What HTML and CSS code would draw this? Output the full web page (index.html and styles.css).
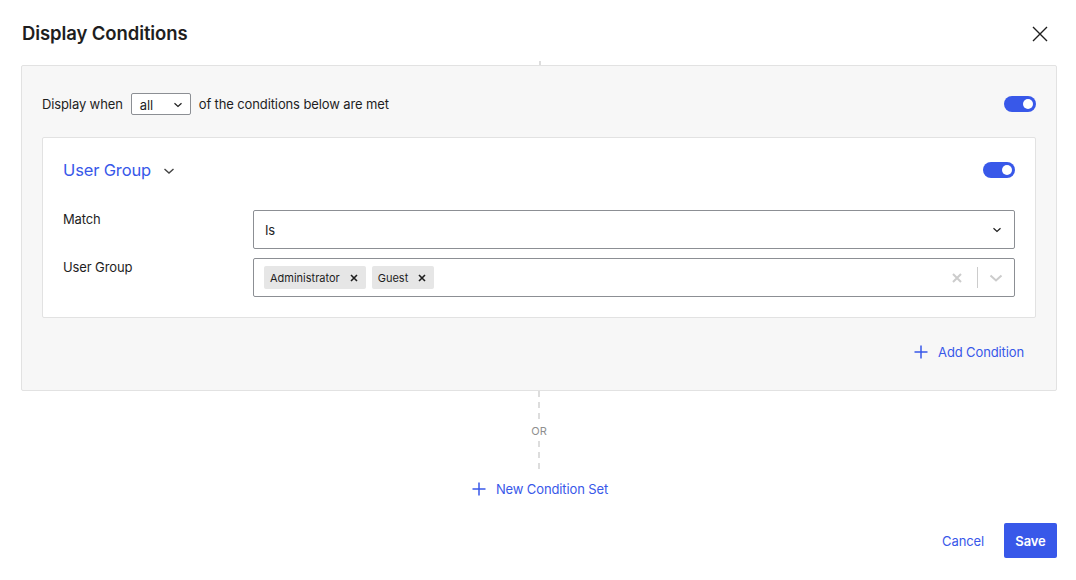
FILE: index.html
```html
<!DOCTYPE html>
<html>
<head>
<meta charset="utf-8">
<link rel="stylesheet" href="styles.css">
</head>
<body>
<div class="modal">
  <div class="header">
    <h1 class="title">Display Conditions</h1>
    <button class="close" aria-label="Close">
      <svg width="16" height="16" viewBox="0 0 16 16"><path d="M1 1L15 15M15 1L1 15" stroke="#1e1e1e" stroke-width="1.4" fill="none"/></svg>
    </button>
  </div>
  <div class="connector-top"></div>
  <div class="set">
    <div class="set-row">
      <div class="set-intro">
        <span>Display when</span>
        <div class="mini-select">
          <span>all</span>
          <svg width="10" height="6" viewBox="0 0 10 6"><path d="M1.5 1.2L5 4.5L8.5 1.2" stroke="#1e1e1e" stroke-width="1.2" fill="none"/></svg>
        </div>
        <span>of the conditions below are met</span>
      </div>
      <div class="toggle"><span class="knob"></span></div>
    </div>
    <div class="card">
      <div class="card-head">
        <div class="card-title">
          <span>User Group</span>
          <svg width="12" height="8" viewBox="0 0 12 8"><path d="M1.5 2L6 6L10.5 2" stroke="#444" stroke-width="1.4" fill="none"/></svg>
        </div>
        <div class="toggle"><span class="knob"></span></div>
      </div>
      <div class="fields">
        <div class="field">
          <label class="field-label">Match</label>
          <div class="control select">
            <span>Is</span>
            <svg width="10" height="6" viewBox="0 0 10 6"><path d="M1.5 1.2L5 4.5L8.5 1.2" stroke="#1e1e1e" stroke-width="1.2" fill="none"/></svg>
          </div>
        </div>
        <div class="field">
          <label class="field-label">User Group</label>
          <div class="control multi">
            <div class="tags">
              <span class="tag">Administrator<svg class="tag-x" width="8" height="8" viewBox="0 0 8 8"><path d="M1 1L7 7M7 1L1 7" stroke="#1e1e1e" stroke-width="1.6" fill="none"/></svg></span>
              <span class="tag">Guest<svg class="tag-x" width="8" height="8" viewBox="0 0 8 8"><path d="M1 1L7 7M7 1L1 7" stroke="#1e1e1e" stroke-width="1.6" fill="none"/></svg></span>
            </div>
            <div class="indicators">
              <svg class="clear" width="12" height="12" viewBox="0 0 12 12"><path d="M2 2L10 10M10 2L2 10" stroke="#cccccc" stroke-width="2" fill="none"/></svg>
              <span class="sep"></span>
              <svg class="drop" width="14" height="8" viewBox="0 0 14 8"><path d="M1.5 1.5L7 6.5L12.5 1.5" stroke="#cccccc" stroke-width="2" fill="none"/></svg>
            </div>
          </div>
        </div>
      </div>
    </div>
    <div class="add-row">
      <button class="link-btn">
        <svg width="14" height="14" viewBox="0 0 14 14"><path d="M7 0.5V13.5M0.5 7H13.5" stroke="#3858e9" stroke-width="1.5" fill="none"/></svg>
        <span>Add Condition</span>
      </button>
    </div>
  </div>
  <div class="or-block">
    <div class="dash dash-a"></div>
    <div class="or">OR</div>
    <div class="dash dash-b"></div>
    <button class="link-btn new-set">
      <svg width="14" height="14" viewBox="0 0 14 14"><path d="M7 0.5V13.5M0.5 7H13.5" stroke="#3858e9" stroke-width="1.5" fill="none"/></svg>
      <span>New Condition Set</span>
    </button>
  </div>
  <div class="footer">
    <button class="cancel">Cancel</button>
    <button class="save">Save</button>
  </div>
</div>
</body>
</html>
```
FILE: styles.css
```css
* { box-sizing: border-box; }
html, body { margin: 0; padding: 0; background: #fff; }
body {
  font-family: Inter, "Noto Sans", "Liberation Sans", sans-serif;
  font-size: 13px;
  letter-spacing: -0.12px;
  color: #1e1e1e;
}
button { font-family: inherit; letter-spacing: inherit; border: none; background: none; padding: 0; cursor: pointer; }
.modal { width: 1076px; height: 580px; padding: 0 19px 0 21px; }
.header {
  height: 61px;
  display: flex;
  align-items: flex-start;
  justify-content: space-between;
  padding-top: 20px;
}
.title { margin: 0; font-size: 18.5px; font-weight: 600; line-height: 26px; letter-spacing: -0.1px; padding-left: 1px; }
.close { width: 16px; height: 16px; margin-top: 6px; margin-right: 9px; display: flex; }
.connector-top { width: 2px; height: 4px; background: #dddddd; margin-left: 518px; }
.set {
  background: #f7f7f7;
  border: 1px solid #e2e2e2;
  border-radius: 2px;
  width: 1036px;
  padding: 27px 20px 28px 20px;
}
.set-row { display: flex; align-items: center; justify-content: space-between; height: 22px; }
.set-intro { display: flex; align-items: center; gap: 8px; color: #1e1e1e; }
.mini-select {
  width: 60px; height: 22px;
  border: 1px solid #8c8f94;
  border-radius: 2px;
  background: #fff;
  display: flex; align-items: center; justify-content: space-between;
  padding: 1px 7px 0 8px;
}
.toggle {
  width: 32px; height: 16px;
  border-radius: 8px;
  background: #3858e9;
  position: relative;
}
.knob {
  position: absolute; right: 3px; top: 3px;
  width: 10px; height: 10px; border-radius: 50%; background: #fff;
}
.card {
  margin-top: 22px;
  background: #fff;
  border: 1px solid #e2e2e2;
  border-radius: 2px;
  padding: 20px 20px 20px 20px;
}
.card-head { display: flex; align-items: center; justify-content: space-between; height: 24px; }
.card-title { display: flex; align-items: center; gap: 12px; color: #3858e9; font-size: 16.5px; line-height: 24px; letter-spacing: -0.15px; }
.card-title svg { margin-top: 1px; }
.fields { margin-top: 28px; display: flex; flex-direction: column; gap: 9px; }
.field { display: flex; align-items: flex-start; }
.field-label { width: 190px; flex: none; padding-top: 0; line-height: 18px; }
.control {
  flex: 1;
  height: 39px;
  border: 1px solid #8c8f94;
  border-radius: 2px;
  background: #fff;
  display: flex; align-items: center; justify-content: space-between;
}
.select { padding: 0 12px 0 11px; }
.multi { padding: 0 10px 0 10px; }
.tags { display: flex; gap: 6px; }
.tag {
  display: inline-flex; align-items: center;
  height: 23px;
  background: #e6e6e6;
  border-radius: 2px;
  font-size: 11px;
  letter-spacing: 0;
  padding: 0 8px 0 6px;
  gap: 10px;
}
.tag-x { display: block; }
.indicators { display: flex; align-items: center; }
.clear { margin-right: 14px; }
.sep { width: 1px; height: 21px; background: #cccccc; margin-right: 11px; }
.drop { margin-right: 1px; }
.add-row { display: flex; justify-content: flex-end; margin-top: 24px; padding-right: 12px; }
.link-btn { display: inline-flex; align-items: center; gap: 10px; color: #3858e9; font-size: 13px; line-height: 20px; }
.or-block { display: flex; flex-direction: column; align-items: center; width: 1036px; }
.dash {
  width: 2px;
  background: repeating-linear-gradient(to bottom, #dddddd 0 6px, transparent 6px 11px);
}
.dash-a { height: 31px; }
.dash-b { height: 30px; }
.or { font-size: 11px; color: #8f8f8f; line-height: 20px; margin: -1px 0 0; }
.new-set { margin-top: 8px; margin-left: 2px; }
.footer { display: flex; justify-content: flex-end; align-items: center; gap: 20px; margin-top: 24px; width: 1036px; }
.cancel { color: #3858e9; font-size: 13px; }
.save {
  width: 53px; height: 35px;
  background: #3858e9; color: #fff;
  border-radius: 2px;
  font-size: 13px; font-weight: 600;
}
```
